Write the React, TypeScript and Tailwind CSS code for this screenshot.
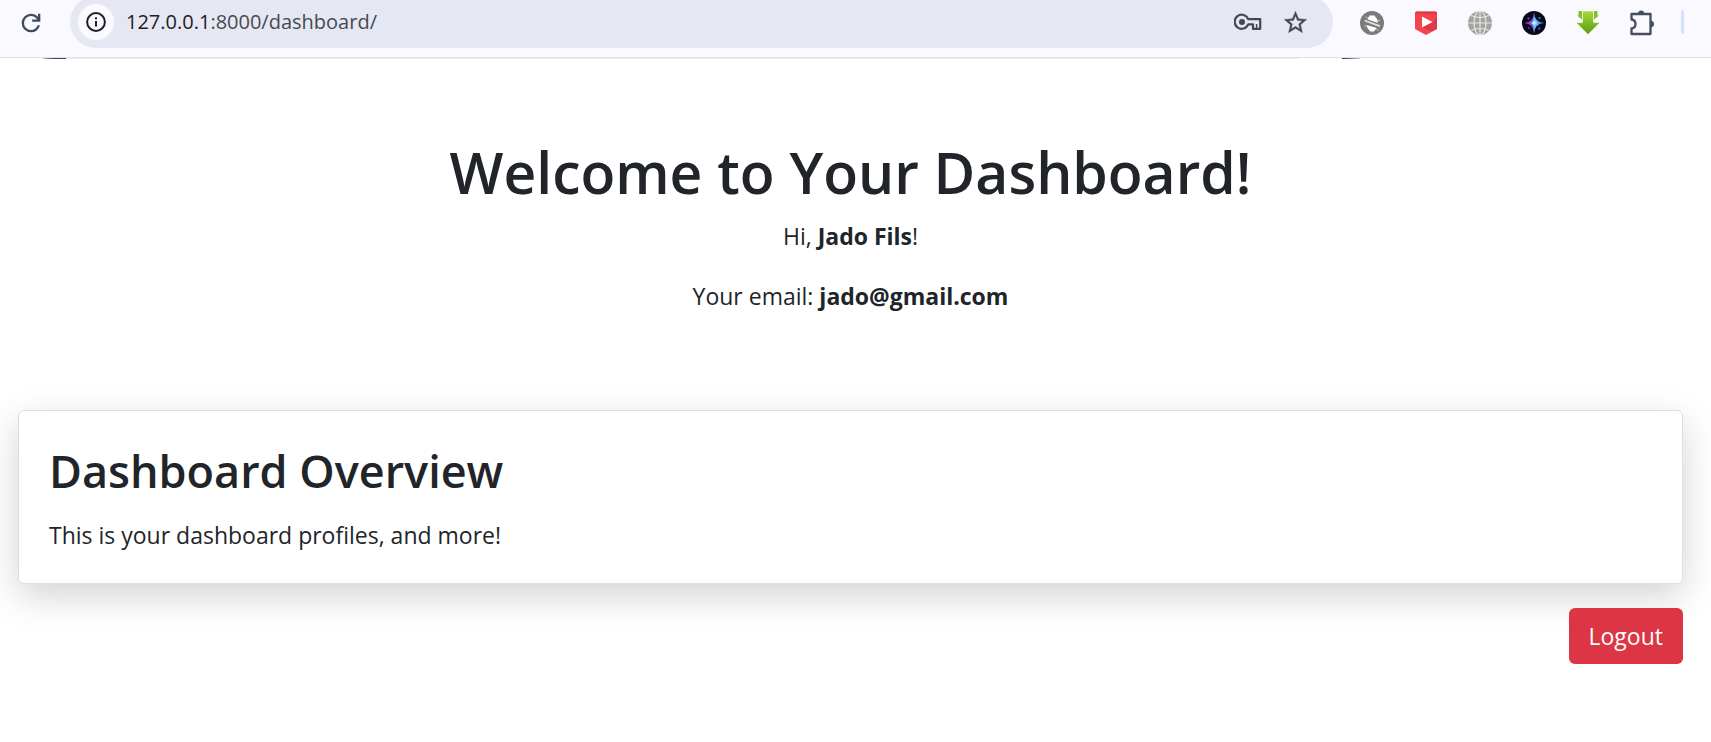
import React from "react";

function ReloadIcon() {
  return (
    <svg viewBox="0 0 24 24" className="size-7" fill="#414b5e" aria-hidden="true">
      <path d="M12 20q-3.35 0-5.675-2.325T4 12t2.325-5.675T12 4q1.725 0 3.3.713T18 6.75V4h2v7h-7V9h4.2q-.8-1.4-2.187-2.2T12 6Q9.500 6 7.750 7.750T6 12t1.750 4.250T12 18q1.925 0 3.475-1.100T17.650 14h2.100q-.7 2.650-2.850 4.325T12 20" />
    </svg>
  );
}

function InfoIcon() {
  return (
    <svg viewBox="0 0 20 20" className="size-5" fill="none" aria-hidden="true">
      <circle cx="10" cy="10" r="8.900" stroke="#1f2023" strokeWidth="2" />
      <path d="M10 9v5.500" stroke="#1f2023" strokeWidth="2" />
      <path d="M10 5.200v2.100" stroke="#1f2023" strokeWidth="2" />
    </svg>
  );
}

function KeyIcon() {
  return (
    <svg viewBox="0 0 28 18" className="h-[18px] w-7" fill="none" stroke="#45484d" strokeWidth="2.200" strokeLinejoin="round" aria-hidden="true">
      <path d="M14.200 6.200A7 7 0 1 0 14.200 11.300H19v4.600h7.200V6.200z" />
      <circle cx="8" cy="8.900" r="3" fill="#45484d" stroke="none" />
      <path d="M22.600 11v4.500" strokeWidth="1.500" />
    </svg>
  );
}

function StarIcon() {
  return (
    <svg viewBox="0 0 24 24" className="size-[27px]" fill="#45484d" stroke="#45484d" strokeWidth=".3" aria-hidden="true">
      <path d="M22 9.240l-7.190-.62L12 2 9.190 8.630 2 9.240l5.460 4.730L5.820 21 12 17.270 18.180 21l-1.630-7.030zM12 15.400l-3.760 2.270 1-4.280-3.320-2.880 4.380-.38L12 6.100l1.710 4.040 4.380.38-3.320 2.880 1 4.280z" />
    </svg>
  );
}

function BlockerIcon() {
  return (
    <svg viewBox="0 0 24 24" className="size-6" aria-hidden="true">
      <circle cx="12" cy="12" r="12" fill="#7b7b7b" />
      <path d="M7.500 8.800C7.500 6 9.200 6.400 9.500 4.500h5c.4 1.900 2.300 1.700 2.800 4.500l.5 3.200z" fill="#fff" />
      <path d="M6.800 14l10 2.900c-.6 1.900-2.300 1.400-2.900 3.600h-3.800c-.5-2.200-3.300-2-3.300-6.500z" fill="#fff" />
      <path d="M3.600 9.200l17 6.200" stroke="#7b7b7b" strokeWidth="4.400" />
      <path d="M4.500 9.500l15.400 5.600" stroke="#e4e4e4" strokeWidth="1.700" />
      <path d="M4 15h3M17.500 9.500H20M5.500 5.800l2 1M16.500 18.500l2 .8" stroke="#c9c9c9" strokeWidth="1" />
    </svg>
  );
}

function VideoIcon() {
  return (
    <svg viewBox="0 0 22 24" className="h-6 w-[22px]" aria-hidden="true">
      <path d="M1.500 .5h19A1.500 1.500 0 0 1 22 2v16L11 24 0 18V2A1.500 1.500 0 0 1 1.500 .5z" fill="#f5434f" />
      <path d="M0 2l22 1.500V2a1.500 1.500 0 0 0-1.500-1.500h-19A1.500 1.500 0 0 0 0 2z" fill="#c93043" opacity=".6" />
      <path d="M17.500 11L22 6v12l-4.500 2.400L7 16.500z" fill="#b92a3d" opacity=".4" />
      <path d="M7 5.500v11L17.500 11z" fill="#fff" />
    </svg>
  );
}

function GlobeIcon() {
  return (
    <svg viewBox="0 0 24 24" className="size-6" fill="none" aria-hidden="true">
      <circle cx="12" cy="12" r="12" fill="#a3a3a1" />
      <g stroke="#e6e6e4" strokeWidth="1.200">
        <path d="M12 0v24M0 12h24M3 4.500q9 4 18 0M3 19.500q9-4 18 0" />
        <ellipse cx="12" cy="12" rx="6" ry="12" />
      </g>
    </svg>
  );
}

function SparkIcon() {
  return (
    <svg viewBox="0 0 24 24" className="size-6" aria-hidden="true">
      <defs>
        <linearGradient id="spark" x1="0" x2="1" y1="0" y2="0">
          <stop offset="0" stopColor="#b02ac8" />
          <stop offset=".42" stopColor="#7a4bdc" />
          <stop offset=".55" stopColor="#6fd0ff" />
          <stop offset="1" stopColor="#1d57a9" />
        </linearGradient>
      </defs>
      <circle cx="12" cy="12" r="12" fill="#070818" />
      <path d="M12 1.500q.2 9.800 10.500 10.500-10.300.7-10.500 10.500-.2-9.800-10.500-10.500Q11.800 11.300 12 1.500z" fill="url(#spark)" />
      <path d="M12 8.500q.5 3 3.500 3.500-3 .5-3.500 3.500-.5-3-3.500-3.500 3-.5 3.500-3.500z" fill="#b9f1ff" />
      <circle cx="6.500" cy="7.500" r="1.200" fill="#8a2fb0" />
      <circle cx="17.500" cy="7" r="1.200" fill="#2c66a8" />
      <circle cx="6.800" cy="17" r="1" fill="#7a2ba6" />
      <circle cx="17.200" cy="17.500" r="1.200" fill="#4a3fc0" />
    </svg>
  );
}

function DownloadIcon() {
  return (
    <svg viewBox="0 0 24 24" className="size-6" aria-hidden="true">
      <defs>
        <linearGradient id="leaf" x1="0" x2="0" y1="0" y2="1">
          <stop offset="0" stopColor="#a4dc3c" />
          <stop offset="1" stopColor="#5c9a10" />
        </linearGradient>
      </defs>
      <path d="M2.500 0H6v8.500L1 4.500h1.500zM21.500 0H18v8.500l5-4h-1.500z" fill="#83bf27" />
      <path d="M6.500 0h11v11.500H24L12 23.500 0 11.500h6.500z" fill="url(#leaf)" stroke="#faf9ff" strokeWidth=".6" />
    </svg>
  );
}

function PuzzleIcon() {
  return (
    <svg viewBox="0 0 26 26" className="size-[26px] shrink-0" aria-hidden="true">
      <path d="M2.500 4h19v20h-19v-5.500q4-.5 4-4.500t-4-4.500z" fill="none" stroke="#454d5f" strokeWidth="2.300" strokeLinejoin="round" />
      <path d="M9 4a3.200 3.500 0 0 1 6.400 0zM21.500 10.700a3.500 3.300 0 0 1 0 6.600z" fill="#454d5f" />
    </svg>
  );
}

const extensions = [
  { label: "Privacy blocker", icon: <BlockerIcon /> },
  { label: "Video", icon: <VideoIcon /> },
  { label: "Globe", icon: <GlobeIcon /> },
  { label: "Spark", icon: <SparkIcon /> },
  { label: "Downloader", icon: <DownloadIcon /> },
  { label: "Extensions", icon: <PuzzleIcon /> },
];

function Toolbar() {
  return (
    <header className="flex h-[58px] items-start overflow-hidden border-b border-[#e0e0e9] bg-[#faf9ff] pr-[27px]">
      <button aria-label="Reload" className="ml-[17px] flex h-[46px] w-7 shrink-0 items-center justify-center">
        <ReloadIcon />
      </button>
      <div className="-mt-1 ml-[25px] flex h-[52px] min-w-0 flex-1 items-center rounded-full bg-[#e5e8f3] pr-6 pl-2">
        <button aria-label="Site information" className="flex size-9 shrink-0 items-center justify-center rounded-full bg-[#faf9ff]">
          <InfoIcon />
        </button>
        <a href="/dashboard/" className="ml-3 flex-1 truncate text-[20px] leading-8 text-[#474a4f]">
          <span className="text-[#1f2023]">127.0.0.1</span>:8000/dashboard/
        </a>
        <div className="flex items-center gap-5">
          <button aria-label="Passwords">
            <KeyIcon />
          </button>
          <button aria-label="Bookmark">
            <StarIcon />
          </button>
        </div>
      </div>
      <nav aria-label="Extensions" className="ml-[27px] flex h-[45px] shrink-0 items-center gap-[30px]">
        {extensions.map((item) => (
          <button key={item.label} aria-label={item.label} className="flex w-6 items-center justify-center">
            {item.icon}
          </button>
        ))}
      </nav>
      <div className="mt-[10px] ml-[27px] h-6 w-[3px] shrink-0 rounded-full bg-[#d3e3fd]" />
    </header>
  );
}

function ScrolledEdge() {
  return (
    <div className="flex h-px pr-[351px] pl-[43px]" aria-hidden="true">
      <div className="w-[23px] bg-linear-to-r from-[#b9bac0] via-[#3c4649] to-[#2f56a8]" />
      <div className="flex-1 bg-[#efeff3]" />
      <div className="w-[42px] bg-white" />
      <div className="w-[18px] bg-linear-to-r from-[#2f3a40] to-[#c9c8dc]" />
    </div>
  );
}

export default function App() {
  return (
    <div className="min-h-screen bg-white font-['Open_Sans','Noto_Sans',sans-serif] text-[#212529]">
      <Toolbar />
      <ScrolledEdge />
      <main className="pr-7 pl-[18px]">
        <section className="pt-[77px] pb-24 text-center">
          <h1 className="text-[57px] leading-[72px] font-semibold">Welcome to Your Dashboard!</h1>
          <p className="mt-2.5 text-[23px] leading-9">
            Hi, <strong>Jado Fils</strong>!
          </p>
          <p className="mt-6 text-[23px] leading-9">
            Your email: <strong>jado@gmail.com</strong>
          </p>
        </section>
        <section className="rounded-md border border-[#dedfe0] bg-white px-[30px] py-[30px] shadow-[0_12px_36px_rgba(0,0,0,0.175)]">
          <h2 className="text-[45px] leading-[60px] font-semibold">Dashboard Overview</h2>
          <p className="mt-4 text-[23px] leading-9">This is your dashboard profiles, and more!</p>
        </section>
        <div className="mt-6 flex justify-end">
          <button className="h-14 rounded-md bg-[#dc3545] px-5 text-[23px] leading-9 text-white">Logout</button>
        </div>
      </main>
    </div>
  );
}
